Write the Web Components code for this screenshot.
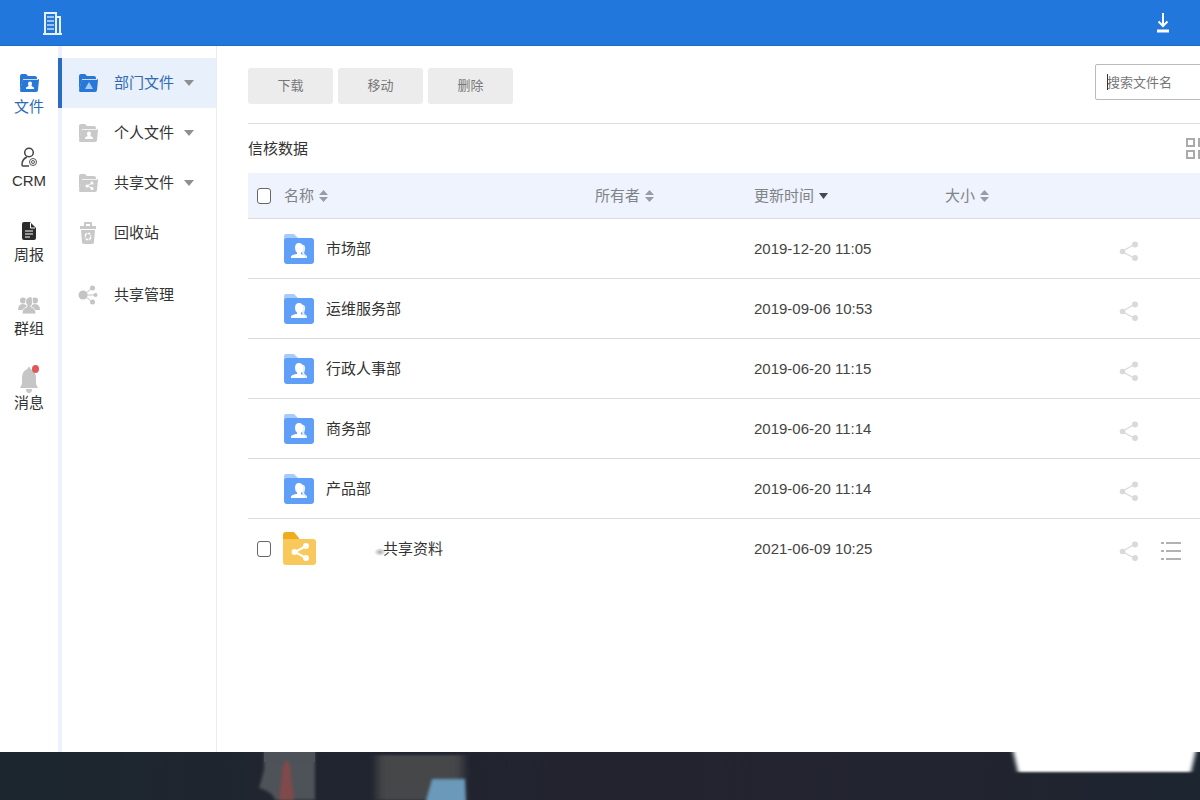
<!DOCTYPE html>
<html lang="zh-CN">
<head>
<meta charset="utf-8">
<title>信核数据</title>
<style>
html, body { margin: 0; }
body { font: 15px/24px "Liberation Sans", "Noto Sans CJK SC", sans-serif; color: #333; background: #fff; overflow-x: hidden; }
</style>
</head>
<body>
<drive-app>
  <top-bar slot="top"></top-bar>
  <main-nav slot="nav">
    <nav-item icon="folder" active>文件</nav-item>
    <nav-item icon="person">CRM</nav-item>
    <nav-item icon="doc">周报</nav-item>
    <nav-item icon="group">群组</nav-item>
    <nav-item icon="bell">消息</nav-item>
  </main-nav>
  <side-menu slot="side">
    <side-item icon="dept" active expandable>部门文件</side-item>
    <side-item icon="personal" expandable>个人文件</side-item>
    <side-item icon="shared" expandable>共享文件</side-item>
    <side-item icon="trash">回收站</side-item>
    <side-item icon="manage" separate>共享管理</side-item>
  </side-menu>
  <tool-bar></tool-bar>
  <title-row>信核数据</title-row>
  <file-table></file-table>
  <task-bar slot="bottom"></task-bar>
</drive-app>

<script>
const folder = (body, mark) => `<svg width="20" height="20" viewBox="0 0 20 20"><path d="M1 17V3q0-2 2-2h4l2 2h7q2 0 2 2v2H4Z" fill="${body}"/><path d="M4 6h15q1 0 1 1l-1 10q0 2-2 2H2q-1 0-1-2Z" fill="${body}"/><path d="M4 6.500h15" stroke="#fff" stroke-opacity=".75" fill="none"/>${mark}</svg>`;
const bust = c => `<circle cx="11" cy="10.500" r="2" fill="${c}"/><path d="M9.500 11h3v2l2.500 1.500V16H7v-1.500l2.500-1.500Z" fill="${c}"/>`;
const share = (size, c) => `<svg width="${size}" height="${size}" viewBox="0 0 20 20"><path d="M16 3 3 10.500 16 17.500" fill="none" stroke="${c}" stroke-width="1.300"/><g fill="${c}"><circle cx="16" cy="3.500" r="3"/><circle cx="3.500" cy="10.500" r="2.800"/><circle cx="16" cy="17" r="3"/></g></svg>`;

const ICONS = {
  folder: folder('#2878d8', bust('#fff')),
  dept: folder('#2878d8', '<path d="m11 9 4 7H7Z" fill="#a9cbf5"/>'),
  personal: folder('#c9c9c9', bust('#fff')),
  shared: folder('#c9c9c9', '<path d="m14 10-5 3 5 2" fill="none" stroke="#fff"/><g fill="#fff"><circle cx="14" cy="10" r="1.500"/><circle cx="9" cy="13" r="1.500"/><circle cx="14" cy="15.500" r="1.500"/></g>'),
  person: '<svg width="18" height="22" viewBox="0 0 18 22"><g fill="none" stroke="#444" stroke-width="1.500"><circle cx="9" cy="6.500" r="4.300"/><path d="M7 11q-5 2-5 8 0 1 1 1h6"/></g><circle cx="13" cy="16" r="3.500" fill="#fff" stroke="#555"/><circle cx="13" cy="16" r="1.500" fill="none" stroke="#555"/></svg>',
  doc: '<svg width="14" height="18" viewBox="0 0 14 18"><path d="M2 0h6l6 6v10q0 2-2 2H2q-2 0-2-2V2q0-2 2-2Z" fill="#2d2d2d"/><path d="M8.500 1v5H13" stroke="#fff" fill="none"/><path d="M3 9h8M3 12h8M3 15h5" stroke="#fff"/></svg>',
  group: '<svg width="22" height="18" viewBox="0 0 22 18" fill="#c4c4c4"><circle cx="5" cy="4.500" r="3"/><circle cx="17" cy="4.500" r="3"/><path d="M0 14q0-6 5-6t5 6ZM12 14q0-6 5-6t5 6Z"/><path d="M4 18q0-6 5-7V9Q7.500 7.500 7.500 5T11 1t3.500 4T13 9v2q5 1 5 7Z" stroke="#fff" stroke-width=".800"/></svg>',
  bell: '<svg width="22" height="28" viewBox="0 0 22 28"><path d="M11 2q1.500 0 1.500 2Q18 6 18 13v6l2 4H2l2-4v-6Q4 6 9.500 4 9.500 2 11 2Z" fill="#c6c6c6"/><path d="M8 24h6q0 4-3 4t-3-4Z" fill="#c6c6c6"/><ellipse cx="17.500" cy="4" rx="3.500" ry="4" fill="#e25858"/></svg>',
  trash: '<svg width="18" height="22" viewBox="0 0 18 22"><path d="M1 4h4V1q0-1 1-1h6q1 0 1 1v3h4v3H1Z" fill="#c8c8c8"/><path d="M7 2h4v2H7Z" fill="#fff"/><path d="M2 8h14l-1 12q0 2-2 2H5q-2 0-2-2Z" fill="#c8c8c8"/><path d="m6 14 1.500-2.500h3L12 14m0 1-1.500 2.500h-3L6 15" fill="none" stroke="#fff" stroke-width="1.500" stroke-dasharray="3 1"/></svg>',
  manage: '<svg width="20" height="20" viewBox="0 0 20 20"><path d="m14 3-8 7 8 7M6 10h11" stroke="#c4c4c4" fill="none"/><g fill="#c4c4c4"><circle cx="5" cy="10" r="4.500"/><circle cx="14.500" cy="3" r="2.500"/><circle cx="17.500" cy="10" r="2"/><circle cx="14.500" cy="17" r="2.500"/></g></svg>',
  blueFolder: '<svg width="30" height="30" viewBox="0 0 30 30"><path d="M0 8V2q0-2 2-2h8l4 4h13q2 0 2 3v3Z" fill="#a7cbfb"/><rect y="4" width="30" height="26" rx="3" fill="#5f9ff8"/><path d="M17 11q5-1 4 5l-1 3q0 1 3 3v2h-4Z" fill="#fff" opacity=".85"/><path d="M15 9q4 0 4 5 0 3-2 5v1l4 2.500V24H7v-1.500q1-2 6-2.500v-1.500q-2-1.500-2-4.500 0-5 4-5Z" fill="#fff"/></svg>',
  yellowFolder: '<svg width="33" height="34" viewBox="0 0 33 34"><path d="M0 9V3q0-3 3-3h8l5 6v4Z" fill="#eeae1c"/><path d="M0 7h30q3 0 3 3v20q0 3-3 3H3q-3 0-3-3Z" fill="#f9c85a"/><path d="m23 14-11 6 11 6" fill="none" stroke="#fff" stroke-width="2"/><g fill="#fff"><circle cx="23" cy="14" r="3"/><circle cx="11.500" cy="20" r="3"/><circle cx="23" cy="26" r="3"/></g></svg>'
};

class Base extends HTMLElement {
  constructor() {
    super();
    this.attachShadow({ mode: 'open' });
  }
  connectedCallback() {
    this.shadowRoot.innerHTML = `<style>
      *, :host { box-sizing: border-box; }
      svg { display: block; flex: none; }
      a { color: inherit; text-decoration: none; }
      button { font: inherit; color: inherit; background: none; border: 0; padding: 0; cursor: pointer; }
      ${this.css || ''}</style>${this.view()}`;
  }
}

customElements.define('drive-app', class extends Base {
  css = `:host { display: flex; flex-direction: column; min-height: 100vh; }
    .body { flex: 1; display: grid; grid-template-columns: 58px 159px minmax(0, 1fr); }
    main { padding-left: 31px; }`;
  view() {
    return `<slot name="top"></slot><div class="body"><slot name="nav"></slot><slot name="side"></slot><main><slot></slot></main></div><slot name="bottom"></slot>`;
  }
});

customElements.define('top-bar', class extends Base {
  css = `:host { display: block; }
    header { height: 46px; display: flex; align-items: center; justify-content: space-between; padding: 0 30px 0 43px; background: #2177db; border-bottom: 1px solid #1c6bc9; }`;
  view() {
    return `<header>
      <a href="#" aria-label="公司"><svg width="19" height="24" viewBox="0 0 19 24" fill="none" stroke="#e6f1ff" stroke-width="2"><path d="M2 23V2h11v21M13 6h4v17M0 23h19"/><path d="M4 6h7M4 10h7M4 14h7M4 18h7" stroke="#c3dcfb" stroke-width="1.500"/></svg></a>
      <button aria-label="下载列表"><svg width="14" height="22" viewBox="0 0 14 22" fill="none" stroke="#fff" stroke-width="2"><path d="M7 1v13M2.500 9.500 7 14l4.500-4.500"/><path d="M1 19h12" stroke-width="3"/></svg></button>
    </header>`;
  }
});

customElements.define('main-nav', class extends Base {
  css = `:host { display: block; } nav { padding-top: 25px; display: flex; flex-direction: column; gap: 26px; }`;
  view() { return `<nav><slot></slot></nav>`; }
});

customElements.define('nav-item', class extends Base {
  css = `:host { display: block; } :host([active]) { color: #2f6bb5; }
    a { display: flex; flex-direction: column; align-items: center; }
    .i { height: 24px; display: flex; align-items: center; }`;
  view() { return `<a href="#"><span class="i">${ICONS[this.getAttribute('icon')]}</span><slot></slot></a>`; }
});

customElements.define('side-menu', class extends Base {
  css = `:host { display: block; border-right: 1px solid #ebedf2; background: linear-gradient(90deg, #eef1f9 4px, #fff 4px); }
    nav { padding-top: 12px; }`;
  view() { return `<nav><slot></slot></nav>`; }
});

customElements.define('side-item', class extends Base {
  css = `:host { display: block; } :host([separate]) { margin-top: 12px; }
    a { height: 50px; display: flex; align-items: center; padding-left: 16px; border-left: 4px solid transparent; }
    :host([active]) a { color: #2f6bb5; background: #e8f0fb; border-color: #2c6bc3; }
    .i { width: 36px; display: flex; } .i svg { min-width: 20px; }
    .c { margin-left: 10px; border: 5px solid transparent; border-top: 6px solid #8c8f94; border-bottom: 0; }`;
  view() {
    return `<a href="#"><span class="i">${ICONS[this.getAttribute('icon')]}</span><slot></slot>${this.hasAttribute('expandable') ? '<span class="c"></span>' : ''}</a>`;
  }
});

customElements.define('tool-bar', class extends Base {
  css = `:host { display: block; overflow: hidden; border-bottom: 1px solid #dedede; }
    .bar { display: flex; justify-content: space-between; padding: 18px 0 19px; font-size: 13px; }
    .actions { display: flex; gap: 5px; padding-top: 4px; }
    .actions button { width: 85px; height: 36px; border-radius: 3px; background: #ececec; color: #777; }
    .search { position: relative; margin-right: -95px; }
    .search::before { content: ""; position: absolute; left: 12px; top: 10px; width: 1px; height: 16px; background: #333; }
    input { display: block; width: 200px; height: 36px; padding: 0 11px; font: inherit; border: 1px solid #bbb; border-radius: 2px; outline: 0; }
    input::placeholder { color: #777; opacity: 1; }`;
  view() {
    return `<div class="bar"><div class="actions"><button>下载</button><button>移动</button><button>删除</button></div>
      <label class="search"><input type="text" placeholder="搜索文件名" aria-label="搜索文件名"></label></div>`;
  }
});

customElements.define('title-row', class extends Base {
  css = `:host { display: block; overflow: hidden; }
    div { height: 49px; display: flex; align-items: center; justify-content: space-between; }
    h1 { margin: 0; font-size: 15px; font-weight: 400; }
    button { margin-right: -8px; }`;
  view() {
    return `<div><h1><slot></slot></h1><button aria-label="网格视图"><svg width="22" height="22" viewBox="0 0 22 22" fill="none" stroke="#aaa" stroke-width="2"><path d="M1 1h7v7H1ZM13 1h7v7h-7ZM1 13h7v7H1ZM13 13h7v7h-7Z"/></svg></button></div>`;
  }
});

const FILES = [
  ['市场部', '2019-12-20 11:05'],
  ['运维服务部', '2019-09-06 10:53'],
  ['行政人事部', '2019-06-20 11:15'],
  ['商务部', '2019-06-20 11:14'],
  ['产品部', '2019-06-20 11:14'],
  ['共享资料', '2021-06-09 10:25', true]
];

customElements.define('file-table', class extends Base {
  css = `:host { display: block; }
    table { width: 100%; table-layout: fixed; border-collapse: separate; border-spacing: 0; text-align: left; }
    th, td { padding: 0; border-bottom: 1px solid #dcdcdc; font-weight: 400; }
    th { height: 46px; background: #eff3fd; color: #808388; }
    td { height: 60px; }
    tr:last-child td { border-color: transparent; }
    .check { width: 36px; } .owner { width: 159px; } .time { width: 191px; } .size { width: 167px; } .acts { width: 88px; }
    input { appearance: none; display: block; width: 14px; height: 16px; margin: 0 0 0 9px; border: 1px solid #666; border-radius: 3px; background: #fff; }
    th button { display: flex; align-items: center; gap: 5px; }
    .file { display: flex; align-items: center; gap: 12px; }
    .shared { gap: 8px; margin-left: -1px; }
    .shared a { padding-left: 59px; background: radial-gradient(ellipse 6px 4px at 56px 15px, #aaa, transparent); }
    .ops { display: flex; align-items: center; gap: 22px; padding: 4px 0 0 7px; }
    td.t { color: #444; }`;
  view() {
    const sort = '<svg width="9" height="12" viewBox="0 0 9 12" fill="#999ca3"><path d="M0 5 4.500 0 9 5ZM0 7h9l-4.500 5Z"/></svg>';
    const down = '<svg width="9" height="6" viewBox="0 0 9 6" fill="#44474d"><path d="M0 0h9L4.500 6Z"/></svg>';
    const list = '<svg width="20" height="20" viewBox="0 0 20 20" fill="none" stroke="#b2b2b2" stroke-width="2"><path d="M0 2h3M5 2h15M0 10h3M5 10h15M0 18h3M5 18h15"/></svg>';
    const row = ([name, time, shared]) => `<tr>
      <td>${shared ? `<input type="checkbox" aria-label="选择${name}">` : ''}</td>
      <td><div class="file ${shared ? 'shared' : ''}">${shared ? ICONS.yellowFolder : ICONS.blueFolder}<a href="#">${name}</a></div></td>
      <td></td><td class="t">${time}</td><td></td>
      <td><div class="ops"><button aria-label="共享">${share(20, '#d9d9d9')}</button>${shared ? `<button aria-label="更多">${list}</button>` : ''}</div></td></tr>`;
    return `<table><thead><tr>
      <th class="check"><input type="checkbox" aria-label="全选"></th>
      <th><button>名称${sort}</button></th>
      <th class="owner"><button>所有者${sort}</button></th>
      <th class="time"><button>更新时间${down}</button></th>
      <th class="size"><button>大小${sort}</button></th>
      <th class="acts"></th></tr></thead><tbody>${FILES.map(row).join('')}</tbody></table>`;
  }
});

customElements.define('task-bar', class extends Base {
  css = `:host { display: block; }
    footer { height: 48px; display: flex; justify-content: space-between; overflow: hidden; background: linear-gradient(90deg, #1b262e, #20252f 22%, #22232f 50%, #22242f 80%, #1c2530); }`;
  view() {
    return `<footer>
      <svg width="500" height="48" viewBox="0 0 500 48"><defs>
        <filter id="s"><feGaussianBlur stdDeviation="1.500"/></filter><filter id="m"><feGaussianBlur stdDeviation="4 1"/></filter></defs>
        <path d="M264 0h51v48h-40q-2-8-16-12l5-18Z" fill="#4d5258" filter="url(#s)"/><path d="M264 0h51v10h-51Z" fill="#4d5258"/>
        <path d="M287 8q4 4 4 14l3 26h-15l3-26q0-10 5-14Z" fill="#804a4c" filter="url(#s)"/>
        <path d="M377 3h86v45h-86Z" fill="#444649" filter="url(#m)"/>
        <path d="M432 27h33l1 25h-41Z" fill="#6a99ba" filter="url(#s)"/></svg>
      <svg width="200" height="48" viewBox="0 0 200 48"><defs><filter id="b"><feGaussianBlur stdDeviation="2 .800"/></filter></defs>
        <path d="M12-6h185l-6 26H18Z" fill="#fff" filter="url(#b)"/></svg>
    </footer>`;
  }
});
</script>
</body>
</html>
